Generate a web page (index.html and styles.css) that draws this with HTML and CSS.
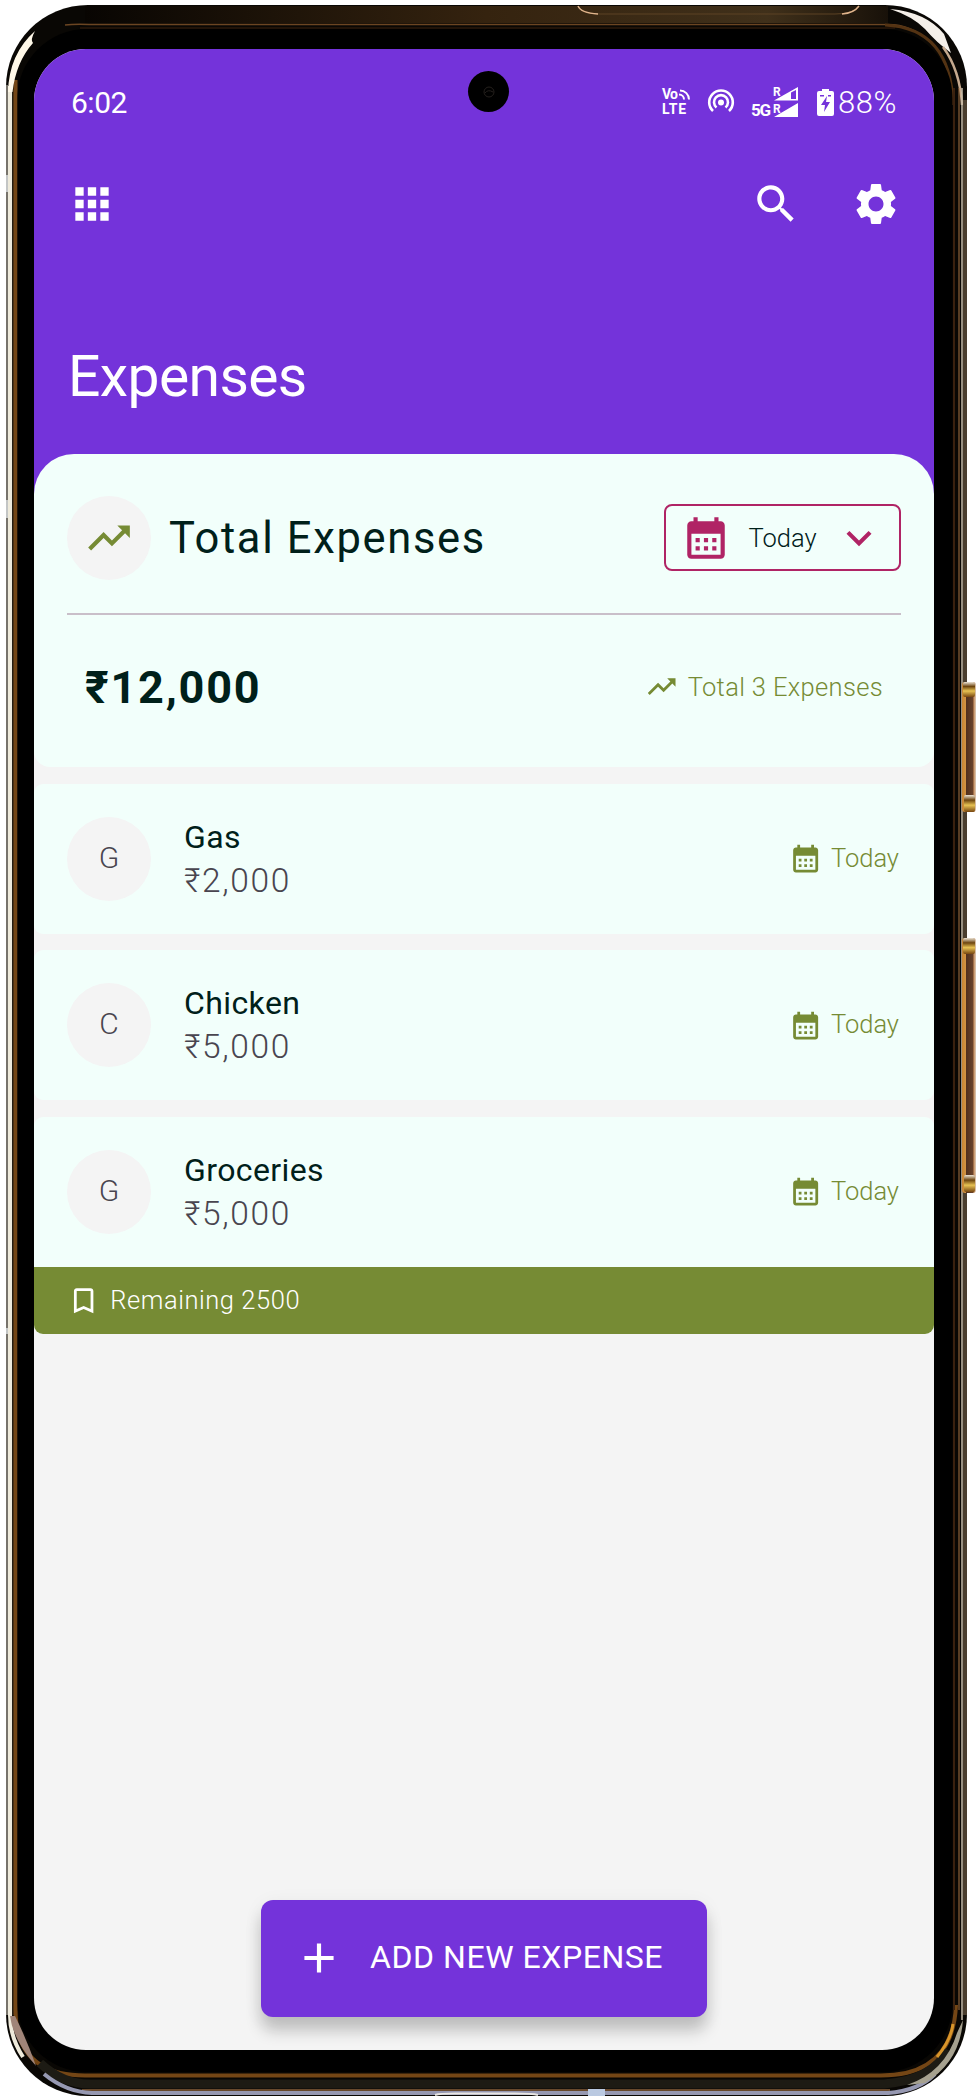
FILE: index.html
```html
<!DOCTYPE html>
<html lang="en">
<head>
<meta charset="utf-8">
<title>Expenses</title>
<link rel="stylesheet" href="styles.css">
</head>
<body>
<svg class="defs" width="0" height="0">
  <symbol id="calendar" viewBox="0 0 24 24"><path d="M19 4h-1V2h-2v2H8V2H6v2H5c-1.1 0-2 .9-2 2v14c0 1.1.9 2 2 2h14c1.1 0 2-.9 2-2V6c0-1.1-.9-2-2-2zm0 16H5V10h14v10zM9 14H7v-2h2v2zm4 0h-2v-2h2v2zm4 0h-2v-2h2v2zm-8 4H7v-2h2v2zm4 0h-2v-2h2v2zm4 0h-2v-2h2v2z"/></symbol>
  <symbol id="trend" viewBox="0 0 24 24"><path d="M16 6l2.29 2.29-4.88 4.88-4-4L2 16.59 3.41 18l6-6 4 4 6.3-6.29L22 12V6z"/></symbol>
</svg>
<div class="device">
  <svg class="frame" viewBox="0 0 978 2100" width="978" height="2100" fill="none">
    <defs>
      <linearGradient id="topEdge" x1="0" x2="1"><stop offset="0" stop-color="#080502"/><stop offset=".5" stop-color="#35230f"/><stop offset=".85" stop-color="#40301a"/><stop offset="1" stop-color="#181109"/></linearGradient>
      <linearGradient id="gold" x1="0" x2="0" y1="0" y2="1"><stop offset="0" stop-color="#8a6234"/><stop offset=".1" stop-color="#c3955a"/><stop offset=".45" stop-color="#eecb90"/><stop offset=".8" stop-color="#c48c4c"/><stop offset="1" stop-color="#5b3512"/></linearGradient>
      <linearGradient id="btn" x1="0" x2="1"><stop offset="0" stop-color="#c98532"/><stop offset=".25" stop-color="#d19343"/><stop offset=".3" stop-color="#51301d"/><stop offset=".78" stop-color="#69432c"/><stop offset=".85" stop-color="#c78d5c"/><stop offset="1" stop-color="#dccbb9"/></linearGradient>
      <linearGradient id="cap" x1="0" x2="0" y1="0" y2="1"><stop offset="0" stop-color="#ece4d6"/><stop offset=".3" stop-color="#6d450f"/><stop offset=".6" stop-color="#e7c253"/><stop offset="1" stop-color="#774611"/></linearGradient>
    </defs>
    <rect x="6" y="5" width="961" height="2091" rx="82" fill="#090704"/>
    <rect x="85" y="6" width="803" height="17" fill="url(#topEdge)"/>
    <path d="M65 25Q74 24 89 24.500H884Q910 23 930 42" stroke="#6b4522" stroke-width="1.500"/>
    <path d="M80 28H895" stroke="#2a180a" stroke-width="1.500"/>
    <path d="M578 6Q581 14 600 14H835Q854 14 859 6" stroke="#5d4324" stroke-width="1"/>
    <path d="M578 6Q581 13 598 14M859 6Q854 13 842 14" stroke="#e0b48c" stroke-width="1.500"/>
    <path d="M7 85V2015" stroke="#77736b" stroke-width="2"/>
    <path d="M10 86V2015Q10 2037 23 2057" stroke="#eeeadb" stroke-width="4"/>
    <path d="M13 90V2015" stroke="#302719" stroke-width="1.500"/>
    <path d="M15.500 80V2010Q16 2076 86 2075.500H880Q953 2076 956 2005" stroke="#744615" stroke-width="4"/>
    <path d="M8 92Q9 54 35 31Q30 40 33 43Q16 62 12.500 92Z" fill="#fff8e8"/>
    <path d="M10 2016Q13 2040 36 2066Q27 2040 15 2016Z" fill="#a08579"/>
    <path d="M890 9Q926 12 944 34L951 53Q936 42 925 29Q912 16 890 9Z" fill="#f4efe9"/>
    <path d="M885 25Q951 28 953 105" stroke="#543313" stroke-width="3"/>
    <path d="M943 47Q960 70 962 105" stroke="#c5a98e" stroke-width="2.500"/>
    <path d="M954 88V2010" stroke="#3a210f" stroke-width="2"/>
    <path d="M957.500 88V2010" stroke="url(#gold)" stroke-width="5"/>
    <path d="M959 88V2010" stroke="#a77445" stroke-width="1"/>
    <path d="M962 88V2020" stroke="#c9bfac" stroke-width="1.500"/>
    <path d="M965 100V2015" stroke="#4a3e2f" stroke-width="4"/>
    <path d="M40 2063Q62 2084 90 2084H884Q932 2080 948 2050" stroke="#1d1b14" stroke-width="9"/>
    <path d="M82 2090H890" stroke="#88603b" stroke-width="1.500"/>
    <path d="M44 2074Q66 2092 92 2093H888Q918 2091 935 2074" stroke="#9698b1" stroke-width="4"/>
    <path d="M435 2095Q440 2093.500 455 2093.500H515Q532 2093.500 538 2095" stroke="#e9e6e3" stroke-width="2"/>
    <rect x="588" y="2089" width="17" height="7" fill="#bac9e1"/>
    <path d="M907 2085Q945 2072 957 2033L963 2020Q960 2062 925 2083Z" fill="#a6a18f"/>
    <path d="M937 2057Q951 2040 953 2024" stroke="#d9952a" stroke-width="3"/>
    <path d="M6 175H8V192H6ZM6 500H8V518H6ZM6 1328H8V1334H6Z" fill="#c3c5c5"/>
    <g><rect x="962" y="682" width="14" height="130" rx="3" fill="url(#btn)"/><rect x="963" y="682" width="12" height="15" rx="2" fill="url(#cap)"/><rect x="964" y="795" width="11" height="17" rx="2" fill="url(#cap)"/></g>
    <g><rect x="962" y="938" width="14" height="255" rx="3" fill="url(#btn)"/><rect x="963" y="938" width="12" height="16" rx="2" fill="url(#cap)"/><rect x="964" y="1175" width="11" height="17" rx="2" fill="url(#cap)"/></g>
    <rect x="17.500" y="29" width="935" height="2043" rx="69" fill="#000"/>
  </svg>

  <main class="screen">
    <header class="header">
      <div class="status">
        <span class="clock">6:02</span>
        <div class="status-icons">
          <svg class="volte" viewBox="0 0 29 26" width="29" height="26" fill="none" stroke="#fff" stroke-width="2"><text class="tiny" x="0" y="10" textLength="16">Vo</text><text class="tiny" x="0" y="25" textLength="24">LTE</text><path d="M17 5.500A5 5 0 0 1 22 10.500M18 1.500A9 9 0 0 1 27 10.500"/></svg>
          <svg class="hotspot" viewBox="0 0 28 26" width="28" height="26" fill="none" stroke="#fff" stroke-width="2.600"><path d="M6 22A11.800 11.800 0 1 1 22 22M9.500 18.500A7 7 0 1 1 18.500 18.500"/><circle cx="14" cy="13.500" r="3" fill="#fff" stroke="none"/></svg>
          <svg class="signal" viewBox="0 0 48 32" width="48" height="32" fill="#fff"><text class="five" x="0" y="30" textLength="20">5G</text><text class="roam" x="22" y="10">R</text><text class="roam" x="22" y="26.500">R</text><path fill-rule="evenodd" d="M23 14.500L47 1V14.500ZM40 6.500V13H45V4ZM23 31L47 17V31Z"/></svg>
          <svg class="battery" viewBox="0 0 17 27" width="17" height="27"><path fill="#fff" fill-rule="evenodd" d="M5 0H12V2H15Q17 2 17 4V25Q17 27 15 27H2Q0 27 0 25V4Q0 2 2 2H5ZM10 7L4 16H8L7 23L13 13H9ZM3 6H7V7.500H3ZM11 6H14V7.500H11Z"/></svg>
          <span class="percent">88%</span>
        </div>
      </div>
      <nav class="toolbar">
        <svg class="icon" viewBox="0 0 24 24"><path d="M4 8h4V4H4v4zm6 12h4v-4h-4v4zm-6 0h4v-4H4v4zm0-6h4v-4H4v4zm6 0h4v-4h-4v4zm6-10v4h4V4h-4zm-6 4h4V4h-4v4zm6 6h4v-4h-4v4zm0 6h4v-4h-4v4z"/></svg>
        <div class="actions">
          <svg class="icon" viewBox="0 0 24 24"><path d="M15.500 14h-.79l-.28-.27C15.410 12.590 16 11.110 16 9.500 16 5.910 13.090 3 9.500 3S3 5.910 3 9.500 5.910 16 9.500 16c1.610 0 3.090-.59 4.230-1.570l.27.28v.79l5 4.990L20.490 19l-4.990-5zm-6 0C7.010 14 5 11.990 5 9.500S7.010 5 9.500 5 14 7.010 14 9.500 11.990 14 9.500 14z"/></svg>
          <svg class="icon" viewBox="0 0 24 24"><path d="M19.140 12.940c.04-.3.06-.61.06-.94 0-.32-.02-.64-.07-.94l2.030-1.580c.18-.14.23-.41.12-.61l-1.920-3.320c-.12-.22-.37-.29-.59-.22l-2.390.96c-.5-.38-1.030-.7-1.620-.94l-.36-2.540c-.04-.24-.24-.41-.48-.41h-3.840c-.24 0-.43.17-.47.41l-.36 2.540c-.59.24-1.130.57-1.620.94l-2.390-.96c-.22-.08-.47 0-.59.22L2.740 8.870c-.12.21-.08.47.12.61l2.030 1.580c-.05.3-.09.63-.09.94s.02.64.07.94l-2.030 1.580c-.18.14-.23.41-.12.61l1.920 3.320c.12.22.37.29.59.22l2.390-.96c.5.38 1.030.7 1.620.94l.36 2.540c.05.24.24.41.48.41h3.840c.24 0 .44-.17.47-.41l.36-2.540c.59-.24 1.130-.56 1.620-.94l2.390.96c.22.08.47 0 .59-.22l1.920-3.320c.12-.22.07-.47-.12-.61l-2.010-1.580zM12 15.600c-1.980 0-3.600-1.620-3.600-3.600s1.620-3.600 3.600-3.600 3.600 1.620 3.600 3.600-1.620 3.600-3.600 3.600z"/></svg>
        </div>
      </nav>
      <h1 class="title">Expenses</h1>
    </header>

    <section class="summary">
      <div class="summary-head">
        <span class="avatar"><svg class="icon"><use href="#trend"/></svg></span>
        <h2 class="summary-title">Total Expenses</h2>
        <button class="filter">
          <svg class="icon"><use href="#calendar"/></svg>
          <span class="filter-label">Today</span>
          <svg class="icon" viewBox="0 0 24 24"><path d="M16.590 8.590L12 13.170 7.410 8.590 6 10l6 6 6-6z"/></svg>
        </button>
      </div>
      <div class="summary-body">
        <strong class="amount">₹12,000</strong>
        <span class="count"><svg class="icon-small"><use href="#trend"/></svg><span>Total 3 Expenses</span></span>
      </div>
    </section>

    <ul class="list">
      <li class="item"><div class="row"><span class="avatar letter">G</span><div class="text"><span class="name">Gas</span><span class="price">₹2,000</span></div><span class="date"><svg class="icon-small"><use href="#calendar"/></svg><span>Today</span></span></div></li>
      <li class="item"><div class="row"><span class="avatar letter">C</span><div class="text"><span class="name">Chicken</span><span class="price">₹5,000</span></div><span class="date"><svg class="icon-small"><use href="#calendar"/></svg><span>Today</span></span></div></li>
      <li class="item"><div class="row"><span class="avatar letter">G</span><div class="text"><span class="name">Groceries</span><span class="price">₹5,000</span></div><span class="date"><svg class="icon-small"><use href="#calendar"/></svg><span>Today</span></span></div>
        <div class="remaining"><svg class="icon-small" viewBox="0 0 24 24"><path d="M17 3H7c-1.100 0-1.990.9-1.990 2L5 21l7-3 7 3V5c0-1.100-.9-2-2-2zm0 15l-5-2.180L7 18V5h10v13z"/></svg><span>Remaining 2500</span></div></li>
    </ul>

    <button class="fab"><svg class="icon" viewBox="0 0 24 24"><path d="M19 13h-6v6h-2v-6H5v-2h6V5h2v6h6v2z"/></svg><span>ADD NEW EXPENSE</span></button>
    <span class="camera"><svg viewBox="0 0 14 14" width="14" height="14" fill="none" stroke="#25201d"><circle cx="7" cy="7" r="5"/><path d="M3 8Q6 4 11 7"/></svg></span>
  </main>
</div>
</body>
</html>
```
FILE: styles.css
```css
* { box-sizing: border-box; }
body { margin: 0; background: #fff; font-family: Roboto, "Liberation Sans", sans-serif; }
h1, h2, ul { margin: 0; padding: 0; }
button { font: inherit; background: none; border: 0; padding: 0; }
svg { flex: none; display: block; }
span { white-space: nowrap; }
.defs { position: absolute; }
.device { position: relative; width: 978px; height: 2100px; padding: 49px 44px 50px 34px; overflow: hidden; }
.frame { position: absolute; left: 0; top: 0; }
.screen { position: relative; width: 900px; height: 2001px; border-radius: 52px; overflow: hidden; background: #f4f4f4; }

.icon { width: 50px; height: 50px; fill: currentColor; }
.icon-small { width: 33.300px; height: 33.300px; fill: currentColor; }

.header { height: 445px; padding: 32px 33px 0; background: #7433da; color: #fff; }
.status { height: 42px; padding: 0 4px; display: flex; align-items: center; justify-content: space-between; }
.clock { font-size: 30px; letter-spacing: -.5px; }
.status-icons { display: flex; align-items: center; }
.percent { font-size: 31px; font-weight: 300; margin-left: 4px; letter-spacing: .6px; }
.hotspot { margin-left: 16px; }
.signal { margin-left: 16px; }
.battery { margin-left: 18px; }
.volte, .signal { overflow: visible; }
.tiny, .five, .roam { fill: #fff; stroke: none; font-weight: 700; }
.tiny { font-size: 14px; }
.five { font-size: 17px; }
.roam { font-size: 12px; }
.toolbar { margin-top: 56px; display: flex; justify-content: space-between; }
.actions { display: flex; gap: 50px; }
.title { margin-top: 112px; padding-left: 1px; font-size: 57px; line-height: 72px; font-weight: 400; letter-spacing: -.6px; }

.summary { height: 313px; margin-top: -40px; padding: 42px 33px 0; border-radius: 40px 40px 16px 16px; background: #f2fffb; color: #00201a; }
.summary-head { height: 119px; display: flex; align-items: flex-start; border-bottom: 2px solid #c9bfc9; }
.avatar { flex: none; width: 84px; height: 84px; border-radius: 50%; display: flex; align-items: center; justify-content: center; background: #f4f4f4; color: #49454f; }
.letter { padding-bottom: 3px; font-size: 30px; font-weight: 300; }
.summary-head .avatar { color: #768b34; }
.summary-title { margin-left: 18px; font-size: 43.500px; line-height: 85px; font-weight: 400; letter-spacing: 1.650px; white-space: nowrap; }
.filter { margin: 8px 0 0 auto; width: 237px; height: 67px; border: 2px solid #b02465; border-radius: 8px; padding: 0 15px 0 15px; display: flex; align-items: center; justify-content: space-between; color: #b02465; }
.filter-label { font-size: 25.500px; font-weight: 300; color: #00201a; }
.summary-body { padding: 0 18px; height: 144px; display: flex; align-items: center; justify-content: space-between; }
.amount { font-size: 45px; letter-spacing: 1.800px; }
.count { display: flex; align-items: center; gap: 9px; font-size: 25.500px; letter-spacing: .350px; font-weight: 300; color: #768b34; }

.list { margin-top: 16.700px; list-style: none; display: flex; flex-direction: column; gap: 16.700px; }
.item { border-radius: 9px; overflow: hidden; background: #f2fffb; }
.row { height: 150px; padding: 0 33px; display: flex; align-items: center; }
.text { margin-left: 33px; display: flex; flex-direction: column; }
.name { font-size: 32px; line-height: 43px; letter-spacing: .400px; color: #00201a; }
.price { font-size: 33.500px; line-height: 43px; letter-spacing: 1.650px; font-weight: 300; color: #49454f; }
.date { margin-left: auto; padding-right: 2px; display: flex; align-items: center; gap: 9px; font-size: 25.500px; font-weight: 300; color: #768b34; }
.remaining { height: 67px; padding: 0 33px; display: flex; align-items: center; gap: 10px; background: #768b34; color: #fff; font-size: 25.500px; letter-spacing: .550px; font-weight: 300; }
.date span, .remaining span { padding-bottom: 2px; }

.fab { position: absolute; left: 227px; top: 1851px; width: 446px; height: 116.500px; padding-left: 33px; border-radius: 12px; display: flex; align-items: center; gap: 26px; background: #7433da; color: #fff; font-size: 32px; letter-spacing: .550px; box-shadow: 0 14px 16px rgba(0,0,0,.2), 0 4px 20px rgba(0,0,0,.06); }
.fab span { padding-bottom: 2px; }
.camera { position: absolute; left: 434px; top: 22px; width: 41px; height: 41px; border-radius: 50%; background: #000; display: flex; align-items: center; justify-content: center; }
```
